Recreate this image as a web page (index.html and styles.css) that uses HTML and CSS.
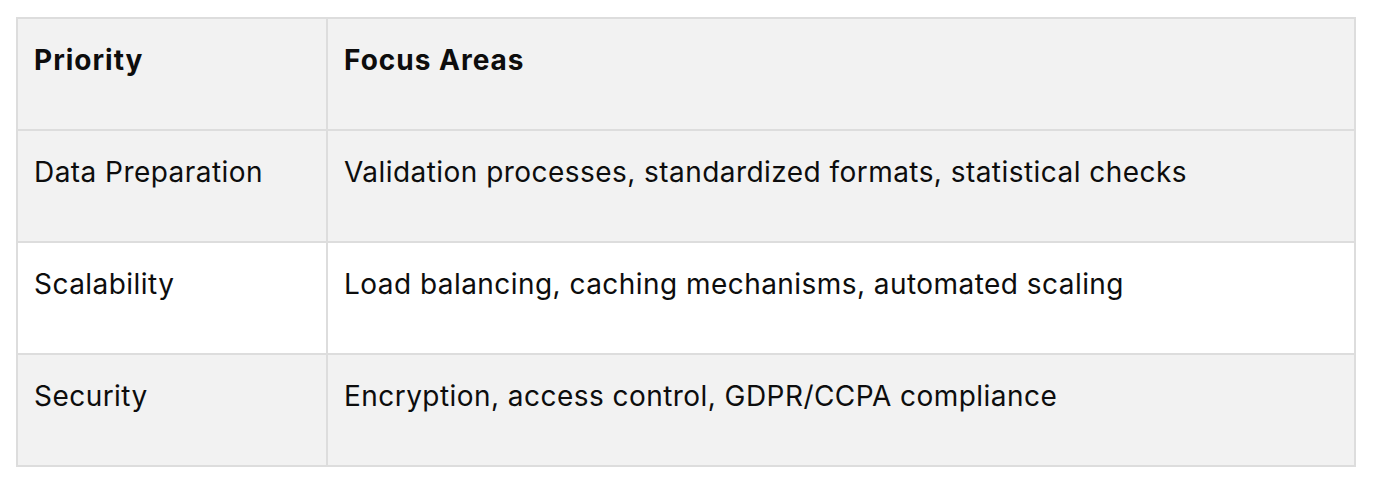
FILE: index.html
```html
<!DOCTYPE html>
<html>
<head>
<meta charset="utf-8">
<link rel="stylesheet" href="styles.css">
</head>
<body>
<table class="grid">
  <thead>
    <tr><th class="c1">Priority</th><th>Focus Areas</th></tr>
  </thead>
  <tbody>
    <tr class="alt"><td>Data Preparation</td><td>Validation processes, standardized formats, statistical checks</td></tr>
    <tr><td>Scalability</td><td>Load balancing, caching mechanisms, automated scaling</td></tr>
    <tr class="alt"><td>Security</td><td>Encryption, access control, GDPR/CCPA compliance</td></tr>
  </tbody>
</table>
</body>
</html>
```
FILE: styles.css
```css
html, body {
  margin: 0;
  background: #ffffff;
}
body {
  padding: 17px 18px 0 16px;
  font-family: Inter, "Noto Sans", sans-serif;
  color: #0d0d0d;
}
.grid {
  border-collapse: collapse;
  width: 1340px;
}
.grid th, .grid td {
  border: 2px solid #dddddd;
  text-align: left;
  vertical-align: top;
  padding: 20px 16px 0 16px;
  height: 90px;
  font-size: 28px;
  line-height: 42px;
  letter-spacing: 0.45px;
}
.grid th {
  font-weight: 700;
  letter-spacing: 1px;
  background: #f2f2f2;
}
.grid .c1 {
  width: 276px;
}
.grid tr.alt td {
  background: #f2f2f2;
}
```
